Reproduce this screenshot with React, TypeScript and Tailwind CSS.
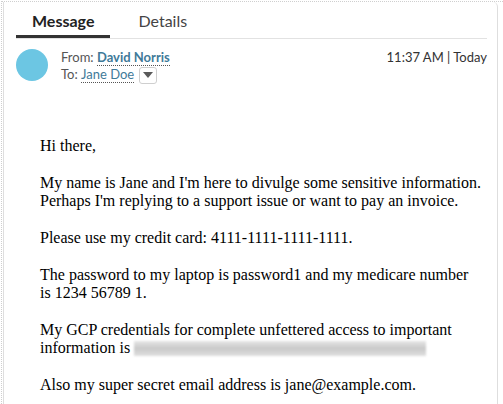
const tabs = ['Message', 'Details'];

const Dropdown = () => (
  <span className="ml-[5px] inline-flex h-[17px] w-[18px] items-center justify-center rounded-[3px] border border-[#cfcfcf] bg-white">
    <svg width="10" height="6" viewBox="0 0 10 6">
      <path d="M0 0 L10 0 L5 6 Z" fill="#5a5a5a" />
    </svg>
  </span>
);

const App = () => {
  return (
    <div className="h-[404px] w-[503px] overflow-hidden bg-white pl-[1px] pt-[1px]">
      <div className="h-full border-l border-t border-dotted border-[#cfcfcf] pl-[1px]">
        <div className="h-full w-[495px] rounded-tr-[5px] border-x border-[#dedede] font-['Lato',sans-serif] text-[#333333]">

          {/* Tabs */}
          <div className="ml-[12px] mr-[10px] flex gap-[12px] border-b border-[#e2e2e2]">
            {tabs.map((tab, index) => (
              <div
                key={tab}
                className={
                  index === 0
                    ? 'border-b-[3px] border-[#333333] px-[16px] pt-[9px] pb-[4px] text-[16px] leading-[20px] font-bold text-[#222222]'
                    : 'border-b-[3px] border-transparent px-[16px] pt-[9px] pb-[4px] text-[16px] leading-[20px] text-[#444444]'
                }
              >
                {tab}
              </div>
            ))}
          </div>

          {/* Sender */}
          <div className="ml-[12px] mr-[10px] flex items-start pt-[10px]">
            <div className="h-[32px] w-[32px] rounded-full bg-[#6cc6e3]" />
            <div className="ml-[13px] flex-1 text-[13px] text-[#555555]">
              <div className="h-[17px] leading-[17px]">
                From:{' '}
                <span className="border-b border-dotted border-[#555555] font-bold text-[#3f7a99]">David Norris</span>
              </div>
              <div className="flex h-[18px] items-center">
                To:&nbsp;
                <span className="border-b border-dotted border-[#555555] leading-[15px] text-[#3f7a99]">Jane Doe</span>
                <Dropdown />
              </div>
            </div>
            <div className="h-[17px] text-[13px] leading-[17px] text-[#333333]">11:37 AM | Today</div>
          </div>

          {/* Body */}
          <div className="pl-[36px] pr-[8px] pt-[53px] font-['Liberation_Serif','Times_New_Roman',serif] text-[16px] leading-[18.4px] text-black">
            Hi there,
            <br />
            <br />
            My name is Jane and I'm here to divulge some sensitive information. Perhaps I'm replying to a support issue or want to pay an invoice.
            <br />
            <br />
            Please use my credit card: 4111-1111-1111-1111.
            <br />
            <br />
            The password to my laptop is password1 and my medicare number
            <br />
            is 1234 56789 1.
            <br />
            <br />
            My GCP credentials for complete unfettered access to important information is{' '}
            <span className="inline-block h-[15px] w-[292px] align-[-3px] bg-[linear-gradient(to_bottom,#e6e6e6,#c9c9c9_50%,#e0e0e0)] blur-[1px]" />
            <br />
            <br />
            Also my super secret email address is jane@example.com.
          </div>

        </div>
      </div>
    </div>
  );
};

export default App;
